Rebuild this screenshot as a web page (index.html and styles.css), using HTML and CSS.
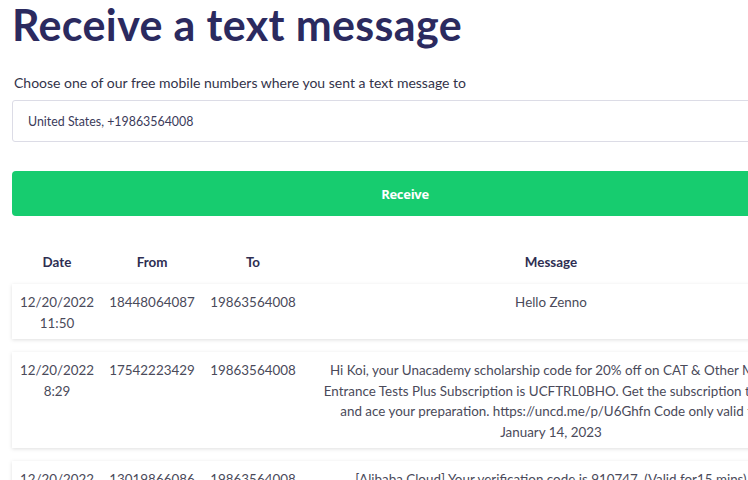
FILE: index.html
```html
<!DOCTYPE html>
<html>
<head>
<meta charset="utf-8">
<link rel="stylesheet" href="styles.css">
</head>
<body>
<div class="page">
  <h1 class="title">Receive a text message</h1>
  <label class="label">Choose one of our free mobile numbers where you sent a text message to</label>
  <div class="select">United States, +19863564008</div>
  <button class="btn">Receive</button>
  <div class="table">
    <div class="thead">
      <div class="c date">Date</div>
      <div class="c from">From</div>
      <div class="c to">To</div>
      <div class="c msg">Message</div>
    </div>
    <div class="row">
      <div class="c date">12/20/2022 11:50</div>
      <div class="c from">18448064087</div>
      <div class="c to">19863564008</div>
      <div class="c msg">Hello Zenno</div>
    </div>
    <div class="row">
      <div class="c date">12/20/2022 8:29</div>
      <div class="c from">17542223429</div>
      <div class="c to">19863564008</div>
      <div class="c msg">Hi Koi, your Unacademy scholarship code for 20% off on CAT &amp; Other MBA Entrance Tests Plus Subscription is UCFTRL0BHO. Get the subscription today and ace your preparation. https://uncd.me/p/U6Ghfn Code only valid till January 14, 2023</div>
    </div>
    <div class="row">
      <div class="c date">12/20/2022 7:58</div>
      <div class="c from">13019866086</div>
      <div class="c to">19863564008</div>
      <div class="c msg">[Alibaba Cloud] Your verification code is 910747. (Valid for15 mins)</div>
    </div>
  </div>
</div>
</body>
</html>
```
FILE: styles.css
```css
html, body {
  margin: 0;
  padding: 0;
  background: #fff;
  overflow: hidden;
}
body {
  font-family: "Lato", "Open Sans", sans-serif;
  color: #4a4a5a;
}
.page {
  width: 786px;
  padding: 0 12px;
  display: flex;
  flex-direction: column;
}
.title {
  margin: 0;
  padding-top: 2px;
  font-size: 43px;
  line-height: 46px;
  font-weight: 700;
  color: #2b2a5f;
  letter-spacing: 0.35px;
}
.label {
  margin-top: 26px;
  padding-left: 2px;
  font-size: 14px;
  line-height: 18px;
  color: #33334a;
}
.select {
  margin-top: 8px;
  height: 42px;
  box-sizing: border-box;
  border: 1px solid #dcdce6;
  border-radius: 3px;
  padding: 0 15px;
  display: flex;
  align-items: center;
  font-size: 12.4px;
  color: #3b3b5a;
}
.btn {
  margin-top: 29px;
  height: 45px;
  border: none;
  border-radius: 4px;
  background: #17cc6f;
  color: #fff;
  font-family: "Open Sans", sans-serif;
  font-weight: 700;
  font-size: 13px;
  letter-spacing: -0.3px;
}
.table {
  margin-top: 36px;
  display: flex;
  flex-direction: column;
  gap: 13px;
  font-size: 13.4px;
  line-height: 20.5px;
}
.thead, .row {
  display: flex;
}
.thead {
  font-weight: 700;
  color: #2e2e52;
  height: 26px;
  margin-bottom: -7px;
}
.row {
  background: #fff;
  box-shadow: 0 1px 4px rgba(0,0,0,0.13);
  padding: 8px 0 6px;
}
.c {
  text-align: center;
  box-sizing: border-box;
  padding: 0 6px;
}
.date { width: 90px; }
.from { width: 100px; }
.to { width: 102px; }
.msg { width: 494px; padding: 0 15px; }
```
